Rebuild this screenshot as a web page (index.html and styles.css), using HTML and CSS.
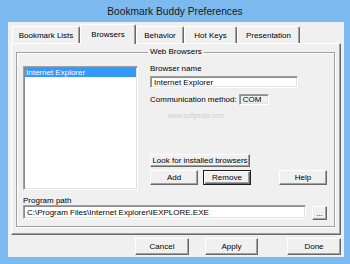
FILE: index.html
```html
<!DOCTYPE html>
<html>
<head>
<meta charset="utf-8">
<title>Bookmark Buddy Preferences</title>
<link rel="stylesheet" href="styles.css">
</head>
<body>
<div class="window">
  <div class="titlebar">Bookmark Buddy Preferences</div>
  <div class="client">
    <div class="tabs">
      <div class="tab tab-lists">Bookmark Lists</div>
      <div class="tab tab-active tab-browsers">Browsers</div>
      <div class="tab tab-behavior">Behavior</div>
      <div class="tab tab-hotkeys">Hot Keys</div>
      <div class="tab tab-presentation">Presentation</div>
    </div>
    <div class="panel">
      <div class="group">
        <span class="legend">Web Browsers</span>
        <div class="group-top">
          <div class="listbox">
            <div class="list-item selected">Internet Explorer</div>
          </div>
          <div class="details">
            <div class="label">Browser name</div>
            <div class="field name-field">Internet Explorer</div>
            <div class="comm-row">
              <span class="label">Communication method:</span>
              <span class="field readonly com-field">COM</span>
            </div>
            <div class="watermark">www.softpedia.com</div>
            <button class="btn look-btn">Look for installed browsers</button>
            <div class="btn-row">
              <button class="btn small-btn">Add</button>
              <button class="btn btn-default small-btn">Remove</button>
              <button class="btn small-btn help-btn">Help</button>
            </div>
          </div>
        </div>
        <div class="label path-label">Program path</div>
        <div class="path-row">
          <div class="field path-field">C:\Program Files\Internet Explorer\IEXPLORE.EXE</div>
          <button class="btn browse-btn">...</button>
        </div>
      </div>
    </div>
    <div class="footer">
      <button class="btn footer-btn cancel-btn">Cancel</button>
      <button class="btn footer-btn apply-btn">Apply</button>
      <button class="btn footer-btn">Done</button>
    </div>
  </div>
</div>
</body>
</html>
```

FILE: styles.css
```css
html, body {
  margin: 0;
  padding: 0;
}
body {
  background: #7cb9ee;
  font-family: "Liberation Sans", Arial, sans-serif;
  font-size: 8px;
  color: #000;
}
.window {
  width: 350px;
  height: 264px;
  display: flex;
  flex-direction: column;
  background: #7cb9ee;
}
.titlebar {
  height: 20px;
  padding-top: 2px;
  line-height: 20px;
  text-align: center;
  font-size: 10.2px;
  color: #1a1a1a;
}
.client {
  flex: 1;
  margin: 0 6px 7px 8px;
  padding: 2px 3px 2px 3px;
  background: #f0f0f0;
  display: flex;
  flex-direction: column;
  min-height: 0;
}
.tabs {
  display: flex;
  align-items: flex-end;
  height: 20px;
  padding-left: 1px;
  position: relative;
  z-index: 1;
}
.tab {
  box-sizing: border-box;
  height: 17px;
  margin-bottom: 1px;
  border: 1px solid;
  border-color: #fff #696969 transparent #fff;
  border-bottom: 0;
  border-radius: 2px 2px 0 0;
  box-shadow: inset -1px 0 0 #a0a0a0;
  display: flex;
  align-items: center;
  justify-content: center;
  white-space: nowrap;
}
.tab-active {
  height: 20px;
  margin-bottom: 0;
  background: #f0f0f0;
}
.tab-lists { width: 68px; }
.tab-browsers { width: 56px; }
.tab-behavior { width: 48px; }
.tab-hotkeys { width: 53px; }
.tab-presentation { width: 63px; }

.panel {
  flex: 1;
  margin-top: -1px;
  border: 1px solid;
  border-color: #fff #696969 #696969 #fff;
  box-shadow: inset -1px -1px 0 #a0a0a0;
  padding: 8px 5px 0 4px;
  min-height: 0;
}
.group {
  position: relative;
  border: 1px solid #a0a0a0;
  box-shadow: 1px 1px 0 #fff, inset 1px 1px 0 #fff;
  padding: 11px 7px 7px 6px;
}
.legend {
  position: absolute;
  top: -6px;
  left: 131px;
  padding: 0 2px;
  line-height: 10px;
  background: #f0f0f0;
}
.group-top {
  display: grid;
  grid-template-columns: 115px 1fr;
  column-gap: 12px;
}
.listbox {
  box-sizing: border-box;
  height: 124px;
  margin-top: 2px;
  background: #fff;
  border: 1px solid;
  border-color: #a0a0a0 #fff #fff #a0a0a0;
  box-shadow: inset 1px 1px 0 #8c8c8c, inset -1px -1px 0 #e3e3e3;
  padding: 1px 1px 0 1px;
}
.list-item {
  height: 9px;
  line-height: 9px;
  padding-left: 1px;
  white-space: nowrap;
}
.list-item.selected {
  background: #3399ff;
  color: #fff;
}
.details {
  display: flex;
  flex-direction: column;
  align-items: flex-start;
  padding-bottom: 5px;
}
.label {
  line-height: 10px;
  white-space: nowrap;
}
.field {
  box-sizing: border-box;
  background: #fff;
  border: 1px solid;
  border-color: #a0a0a0 #fff #fff #a0a0a0;
  box-shadow: inset 1px 1px 0 #8c8c8c, inset -1px -1px 0 #e3e3e3;
  padding: 0 3px;
  display: flex;
  align-items: center;
  white-space: nowrap;
}
.field.readonly {
  background: #f0f0f0;
}
.name-field {
  width: 148px;
  height: 12px;
  margin-top: 2px;
}
.comm-row {
  display: flex;
  align-items: center;
  margin-top: 6px;
}
.com-field {
  width: 30px;
  height: 11px;
  margin-left: 2px;
}
.watermark {
  margin-top: 7px;
  margin-left: 18px;
  line-height: 8px;
  font-size: 6.5px;
  color: #cfcfcf;
}
.btn {
  box-sizing: border-box;
  font: inherit;
  color: #000;
  background: #f0f0f0;
  border: 1px solid;
  border-color: #fff #696969 #696969 #fff;
  box-shadow: inset -1px -1px 0 #a0a0a0;
  padding: 0;
  margin: 0;
  display: flex;
  align-items: center;
  justify-content: center;
  white-space: nowrap;
}
.btn-default {
  border-color: #1e1e1e;
  box-shadow: inset 1px 1px 0 #fff, inset -1px -1px 0 #696969, inset -2px -2px 0 #a0a0a0;
}
.look-btn {
  margin-top: auto;
  width: 100px;
  height: 13px;
}
.btn-row {
  display: flex;
  gap: 5px;
  margin-top: 3px;
  align-self: stretch;
}
.small-btn {
  width: 48px;
  height: 15px;
}
.help-btn {
  margin-left: auto;
}
.path-label {
  margin-top: 6px;
  line-height: 9px;
}
.path-row {
  display: flex;
  gap: 6px;
  height: 14px;
}
.path-field {
  flex: 1;
  height: 14px;
}
.browse-btn {
  width: 15px;
  height: 14px;
  margin-top: 1px;
}
.footer {
  display: flex;
  justify-content: flex-end;
  margin-top: 3px;
}
.footer-btn {
  width: 54px;
  height: 17px;
}
.cancel-btn {
  margin-right: 16px;
}
.apply-btn {
  width: 53px;
  margin-right: 29px;
}
```
